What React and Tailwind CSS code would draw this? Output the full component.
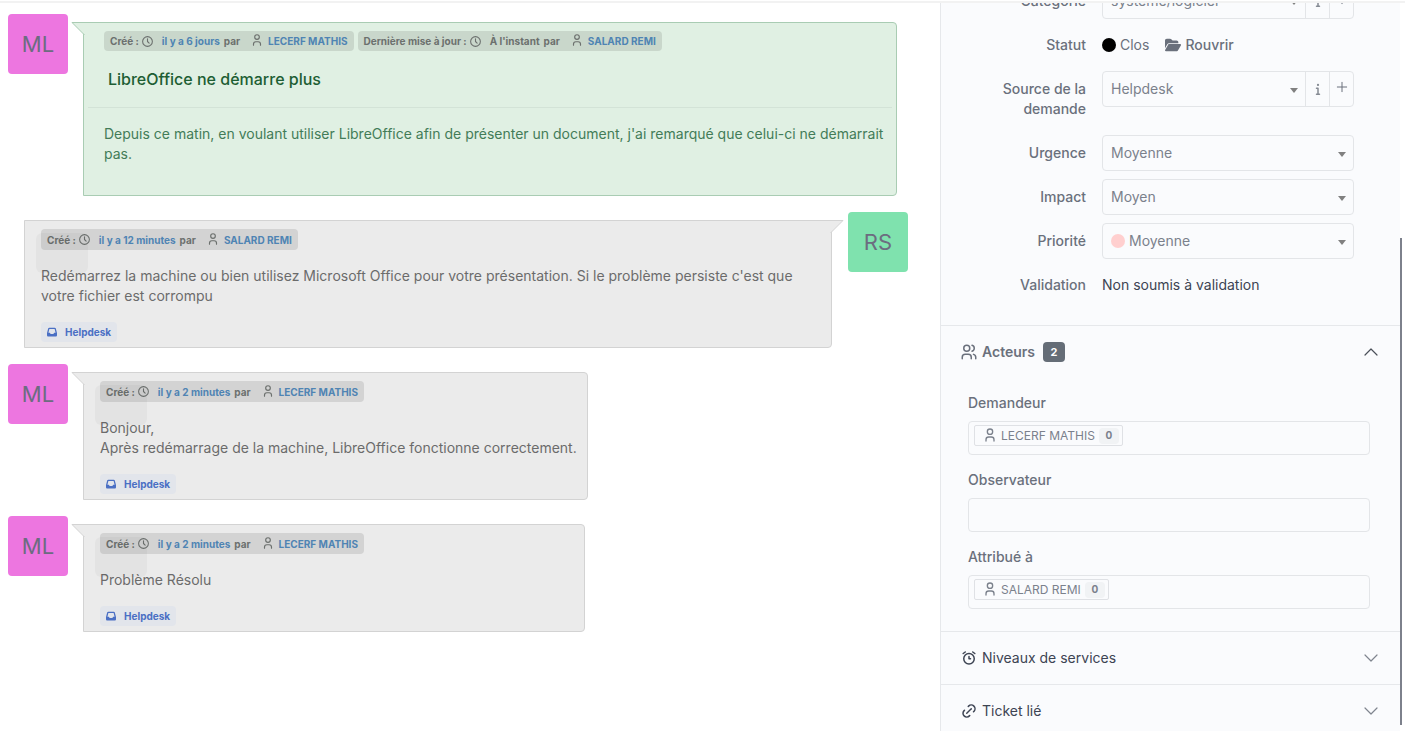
import { TbClock, TbUser, TbUsers, TbAlarm, TbLink, TbPlus } from "react-icons/tb";
import { FaFolderOpen, FaInbox, FaInfo } from "react-icons/fa6";

const tones = {
  green: { box: "bg-[#e0f0e3] border-[#a9ccb3]", fill: "#e0f0e3", line: "#a9ccb3" },
  gray: { box: "bg-[#ebebeb] border-[#d3d3d3]", fill: "#ebebeb", line: "#d3d3d3" },
};

function Avatar({ initials, className }) {
  return (
    <span className={`flex size-15 shrink-0 items-center justify-center rounded text-[22px] text-[#6c6c80] ${className}`}>
      {initials}
    </span>
  );
}

function Stamp({ label, when, link, author, tall }) {
  return (
    <span className={`flex w-fit items-center rounded bg-black/10 px-1.5 text-[10px] font-bold text-[#6c706e] ${tall ? "h-[21px]" : "h-5"}`}>
      {label} :
      <TbClock className="mr-2 ml-0.5 size-[13px]" />
      {link ? <a href="#date" className="text-[#4f84b3]">{when}</a> : <span>{when}</span>}
      <span className="ml-1">par</span>
      <TbUser className="mr-1 mb-0.5 ml-2.5 size-3.5" />
      <a href="#user" className="text-[#4f84b3]">{author}</a>
    </span>
  );
}

function Bubble({ tone, side = "left", className = "", children }) {
  const t = tones[tone];
  return (
    <article className={`relative mt-2 border ${side === "left" ? "rounded-r" : "rounded-br"} ${t.box} ${className}`}>
      <svg
        aria-hidden="true"
        viewBox="0 0 14 14"
        className={`absolute -top-px size-3.5 ${side === "left" ? "-left-[13px]" : "-right-[13px] -scale-x-100"}`}
      >
        <path d="M1 0.5H14V13.5Z" fill={t.fill} />
        <path d="M14 0.5H1L13.5 13" fill="none" stroke={t.line} />
      </svg>
      {children}
    </article>
  );
}

function Reply({ side, when, author, className, children }) {
  return (
    <Bubble tone="gray" side={side} className={`pt-2 pr-2.5 pb-[5px] pl-4 ${className}`}>
      <span aria-hidden="true" className="absolute top-3 left-[11px] h-10 w-13 rounded-md bg-black/3" />
      <Stamp label="Créé" when={when} link author={author} tall />
      <div className="mt-4 text-sm leading-5 text-[#6b6b6b]">{children}</div>
      <span className="mt-4 flex h-5 w-fit items-center gap-2 rounded bg-[#e2e5eb] px-1.5 text-[10px] font-bold text-[#4a6fc4]">
        <FaInbox className="size-2.5" />
        Helpdesk
      </span>
    </Bubble>
  );
}

function Row({ id, label, children }) {
  return (
    <div className="flex items-start">
      <label htmlFor={id} className="w-[98px] shrink-0 py-2 text-right font-medium">{label}</label>
      <div className="ml-4 flex h-9 min-w-0 flex-1 items-center">{children}</div>
    </div>
  );
}

function Select({ id, value, dot, addons }) {
  return (
    <div className="flex h-9 w-full rounded border border-[#e3e5e8]">
      <div className="relative flex min-w-0 flex-1 items-center">
        {dot && <span className="ml-2 size-3.5 shrink-0 rounded-full bg-[#ffcfcf]" />}
        <select
          id={id}
          className={`h-full w-full appearance-none bg-transparent pr-6 text-[#7b818c] outline-none ${dot ? "pl-1" : "pl-2"}`}
        >
          <option>{value}</option>
        </select>
        <svg aria-hidden="true" viewBox="0 0 8 5" className="pointer-events-none absolute top-4 right-[7px] h-[5px] w-2 fill-[#808080]">
          <path d="M0 0H8L4 5Z" />
        </svg>
      </div>
      {addons && (
        <>
          <button type="button" aria-label="Informations" className="flex w-6 items-center justify-center border-l border-[#e3e5e8] text-[#858a93]">
            <FaInfo className="size-3" />
          </button>
          <button type="button" aria-label="Ajouter" className="flex w-6 items-center justify-center border-l border-[#e3e5e8] pb-1">
            <TbPlus className="size-4" strokeWidth={1.5} />
          </button>
        </>
      )}
    </div>
  );
}

function Chevron({ up }) {
  return (
    <svg aria-hidden="true" viewBox="0 0 14 8" fill="none" strokeLinecap="round" strokeLinejoin="round" className={`ml-auto h-2 w-3.5 ${up ? "stroke-[#4a5058]" : "rotate-180 stroke-[#7f858e]"}`}>
      <path d="M1 7L7 1L13 7" strokeWidth="1.2" />
    </svg>
  );
}

function SectionHeader({ icon, title, open, count }) {
  return (
    <button
      type="button"
      aria-expanded={Boolean(open)}
      className={`flex h-[53px] w-full shrink-0 items-center border-t border-[#e6e8eb] pr-[22px] pl-[18px] ${open ? "font-semibold text-[#6a707c]" : "text-[#3d4453]"}`}
    >
      <span className="flex w-5 justify-center">{icon}</span>
      <span className="ml-[3px]">{title}</span>
      {count && (
        <span className="ml-2 flex h-5 w-[22px] items-center justify-center rounded bg-[#656d77] text-[11px] font-bold text-white">{count}</span>
      )}
      <Chevron up={open} />
    </button>
  );
}

function Actor({ id, label, name }) {
  return (
    <div>
      <label htmlFor={id} className="mb-2 block font-medium">{label}</label>
      <div className="flex h-[34px] items-start rounded border border-[#e3e5e8] p-[5px] pt-[3px]">
        {name && (
          <span className="flex h-[21px] shrink-0 items-center rounded-xs border border-[#dfe1e5] pr-[3px] pl-[7px] text-xs text-[#7b818c]">
            <TbUser className="mr-[3px] mb-0.5 size-4" />
            {name}
            <span className="ml-1 flex h-4 w-5 items-center justify-center rounded bg-[#f1f3f5] text-[10px] font-bold">0</span>
          </span>
        )}
        <input id={id} className="h-full min-w-0 flex-1 bg-transparent px-1 outline-none" />
      </div>
    </div>
  );
}

export default function App() {
  return (
    <div className="flex h-screen flex-col overflow-hidden bg-white pt-px pb-1 font-['Inter',sans-serif] text-sm leading-5 text-[#6a707c]">
      <div className="flex min-h-0 flex-1 border-t-2 border-[#f2f2f2]">
        <main className="flex min-w-0 flex-1 flex-col gap-4 overflow-hidden pt-[11px] pr-8 pl-2">
          <div className="flex items-start gap-[15px] pr-[11px]">
            <Avatar initials="ML" className="bg-[#ed76e0]" />
            <Bubble tone="green" className="flex-1 px-1 pt-2 pb-[31px]">
              <div className="flex gap-1 px-4">
                <Stamp label="Créé" when="il y a 6 jours" link author="LECERF MATHIS" />
                <Stamp label="Dernière mise à jour" when="À l'instant" author="SALARD REMI" />
              </div>
              <h1 className="mt-4 px-5 text-base leading-6 font-medium text-[#1d5e33]">LibreOffice ne démarre plus</h1>
              <hr className="mt-4 border-[#d3e3d7]" />
              <p className="mt-4 pr-1 pl-4 text-[#437c58]">
                Depuis ce matin, en voulant utiliser LibreOffice afin de présenter un document, j'ai remarqué que celui-ci ne démarrait pas.
              </p>
            </Bubble>
          </div>

          <div className="flex items-start gap-4 pl-4">
            <Reply side="right" when="il y a 12 minutes" author="SALARD REMI" className="flex-1">
              <p>
                Redémarrez la machine ou bien utilisez Microsoft Office pour votre présentation. Si le problème persiste c'est que votre fichier est corrompu
              </p>
            </Reply>
            <Avatar initials="RS" className="bg-[#7fe2ae]" />
          </div>

          <div className="flex items-start gap-[15px]">
            <Avatar initials="ML" className="bg-[#ed76e0]" />
            <Reply when="il y a 2 minutes" author="LECERF MATHIS">
              <p>Bonjour,</p>
              <p>Après redémarrage de la machine, LibreOffice fonctionne correctement.</p>
            </Reply>
          </div>

          <div className="flex items-start gap-[15px]">
            <Avatar initials="ML" className="bg-[#ed76e0]" />
            <Reply when="il y a 2 minutes" author="LECERF MATHIS" className="w-[502px]">
              <p>Problème Résolu</p>
            </Reply>
          </div>
        </main>

        <aside className="flex w-[460px] shrink-0 flex-col overflow-hidden border-l border-[#e6e8eb] bg-[#fafbfd]">
          <div className="-mt-5 flex shrink-0 flex-col gap-2 pr-[46px] pb-[22px] pl-[47px]">
            <Row id="category" label="Catégorie"><Select id="category" value="système/logiciel" addons /></Row>
            <Row label="Statut">
              <span className="size-3.5 rounded-full bg-black" />
              <span className="ml-1">Clos</span>
              <button type="button" className="ml-4 flex items-center gap-1 font-medium">
                <FaFolderOpen className="size-4" />
                Rouvrir
              </button>
            </Row>
            <Row id="source" label="Source de la demande"><Select id="source" value="Helpdesk" addons /></Row>
            <Row id="urgency" label="Urgence"><Select id="urgency" value="Moyenne" /></Row>
            <Row id="impact" label="Impact"><Select id="impact" value="Moyen" /></Row>
            <Row id="priority" label="Priorité"><Select id="priority" value="Moyenne" dot /></Row>
            <Row label="Validation"><span className="text-[#3d4453]">Non soumis à validation</span></Row>
          </div>

          <SectionHeader icon={<TbUsers className="size-[18px]" />} title="Acteurs" open count="2" />
          <div className="flex shrink-0 flex-col gap-[15px] pt-[15px] pr-[30px] pb-[22px] pl-[27px]">
            <Actor id="requester" label="Demandeur" name="LECERF MATHIS" />
            <Actor id="observer" label="Observateur" />
            <Actor id="assigned" label="Attribué à" name="SALARD REMI" />
          </div>
          <SectionHeader icon={<TbAlarm className="size-[18px]" />} title="Niveaux de services" />
          <SectionHeader icon={<TbLink className="size-[18px]" />} title="Ticket lié" />
        </aside>

        <div aria-hidden="true" className="flex w-[5px] shrink-0 flex-col pt-[235px] pb-1.5">
          <span className="w-0.5 flex-1 bg-[#7d818c]" />
        </div>
      </div>
    </div>
  );
}
